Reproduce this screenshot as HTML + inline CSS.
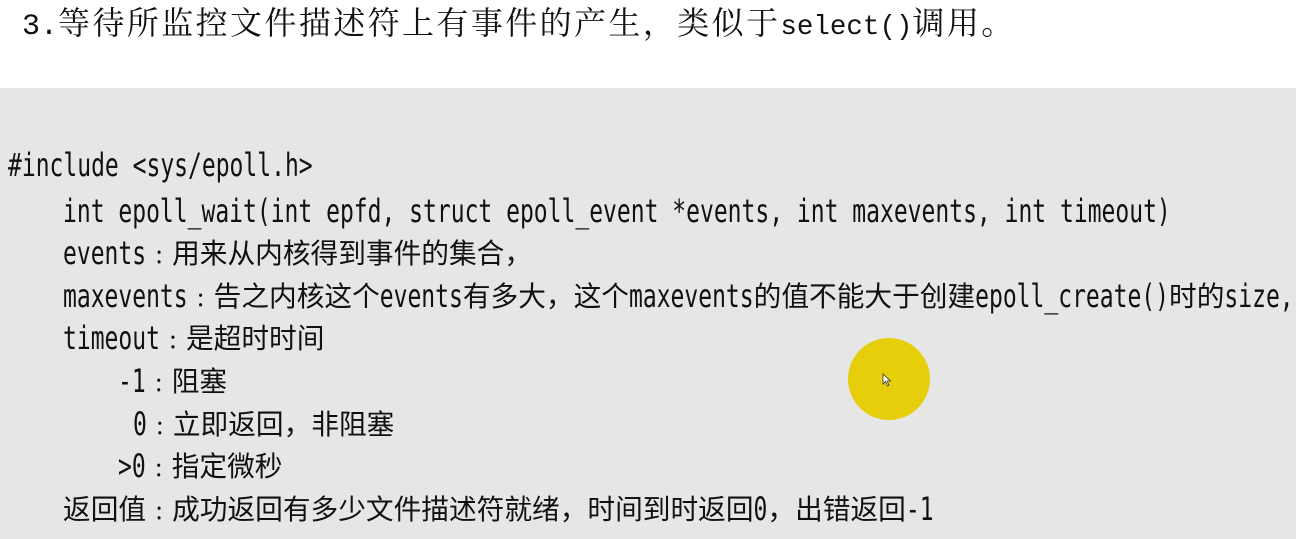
<!DOCTYPE html>
<html><head><meta charset="utf-8"><style>
body{margin:0;width:1296px;height:539px;overflow:hidden;background:#fff;position:relative}
.title{position:absolute;left:22px;top:0;height:46px;line-height:46px;font-family:"Liberation Serif","Noto Serif CJK SC",serif;font-size:32px;color:#111;letter-spacing:2.4px;white-space:nowrap}
.title .l{font-family:"Liberation Mono",monospace;letter-spacing:0;font-size:27.5px}
.title .n{font-family:"Liberation Mono",monospace;letter-spacing:0;font-size:30px}
.box{position:absolute;left:0;top:88px;width:1296px;height:451px;background:#e6e6e6}
.ln{position:absolute;height:40px;line-height:40px;white-space:nowrap;color:#111;font-family:"Noto Sans CJK SC","WenQuanYi Zen Hei",sans-serif;font-size:27.7px}
.m{display:inline-block;font-family:"DejaVu Sans Mono",monospace;font-size:23px;transform:scaleY(1.4);transform-origin:50% 60%}
.k{display:inline-block;width:26px;text-align:center;font-size:24px}
.dot{position:absolute;left:848px;top:338px;width:82px;height:82px;border-radius:50%;background:#e6cf0a}
</style></head><body>
<div class="title"><span class="n">3.</span>等待所监控文件描述符上有事件的产生，类似于<span class="l">select()</span>调用。</div>
<div class="box"></div>
<div class="ln" style="left:8px;top:143px"><span class="m">#include &lt;sys/epoll.h&gt;</span></div>
<div class="ln" style="left:63px;top:189px"><span class="m">int epoll_wait(int epfd, struct epoll_event *events, int maxevents, int timeout)</span></div>
<div class="ln" style="left:63px;top:231px"><span class="m">events</span><span class="k">:</span>用来从内核得到事件的集合，</div>
<div class="ln" style="left:63px;top:274px"><span class="m">maxevents</span><span class="k">:</span>告之内核这个<span class="m">events</span>有多大，这个<span class="m">maxevents</span>的值不能大于创建<span class="m">epoll_create()</span>时的<span class="m">size,</span></div>
<div class="ln" style="left:63px;top:316px"><span class="m">timeout</span><span class="k">:</span>是超时时间</div>
<div class="ln" style="left:118px;top:359px"><span class="m">-1</span><span class="k">:</span>阻塞</div>
<div class="ln" style="left:133px;top:402px"><span class="m">0</span><span class="k">:</span>立即返回，非阻塞</div>
<div class="ln" style="left:118px;top:444px"><span class="m">&gt;0</span><span class="k">:</span>指定微秒</div>
<div class="ln" style="left:63px;top:487px">返回值<span class="k">:</span>成功返回有多少文件描述符就绪，时间到时返回<span class="m">0</span>，出错返回<span class="m">-1</span></div>
<div class="dot"></div>
<svg style="position:absolute;left:882px;top:373px" width="10" height="14" viewBox="0 0 10 14"><path d="M1 1 L1 11 L3.5 8.5 L5.5 13 L7 12.3 L5 8 L8.5 8 Z" fill="#fff" stroke="#333" stroke-width="0.8"/></svg>
</body></html>
